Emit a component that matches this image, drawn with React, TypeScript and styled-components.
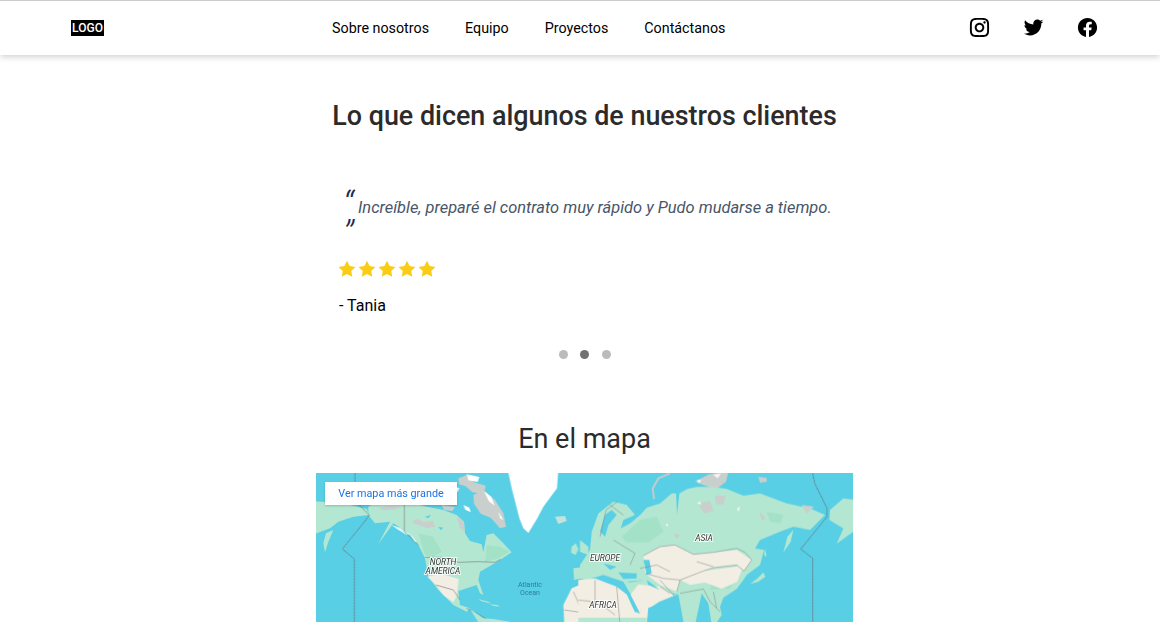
import React from "react";
import styled, { createGlobalStyle } from "styled-components";
import { RiInstagramLine, RiTwitterFill, RiFacebookCircleFill } from "react-icons/ri";

const Global = createGlobalStyle`
  html, body { margin: 0; padding: 0; background: #fff; overflow: hidden; }
  body { font-family: Roboto, "Liberation Sans", sans-serif; color: #000; }
`;
const Page = styled.div`width: 1160px; height: 622px; overflow: hidden; display: flex; flex-direction: column;`;
const Header = styled.header`
  height: 55px; flex: none; box-sizing: border-box; border-top: 1px solid #ccc; background: #fff;
  box-shadow: 0 2px 6px rgba(0,0,0,.18); display: flex; align-items: center; padding: 0 61px 0 71px;
  position: relative;
`;
const Logo = styled.div`
  width: 33px; height: 16px; background: #000; color: #fff; font-size: 12px; font-weight: 500; line-height: 16px;
  text-align: center; margin-right: 228px;
`;
const Nav = styled.nav`display: flex; gap: 36px; flex: 1;`;
const NavLink = styled.a`font-size: 14.3px; line-height: 20px; color: #000;`;
const Social = styled.div`display: flex; gap: 31px; color: #000; font-size: 23px; line-height: 0; margin-top: -1px;`;
const Main = styled.main`display: flex; flex-direction: column; align-items: center; padding-left: 9px; flex: 1;`;
const Title = styled.h2`font-size: 26.88px; line-height: 32px; font-weight: 500; color: #2b2b2b; margin: 45px 0 0;`;
const Card = styled.section`width: 493px; margin-top: 53px; box-sizing: border-box;`;
const QuoteRow = styled.div`display: flex; padding-left: 5px; height: 63px;`;
const QuoteMarks = styled.div`
  width: 15px; flex: none; font-style: italic; font-weight: 300; color: #1e2a55; font-size: 36px; line-height: 30px;
  height: 60px; margin-top: 5px;
`;
const Mark = styled.div`height: 30px;`;
const QuoteText = styled.p`font-size: 16.43px; font-style: italic; color: #475569; line-height: 24px; margin: 11px 0 0; white-space: nowrap;`;
const Stars = styled.div`display: flex; gap: 2px; margin-top: 12px; height: 18px;`;
const Author = styled.p`font-size: 16px; line-height: 24px; margin: 16px 0 0 1px;`;
const Dots = styled.div`display: flex; justify-content: center; gap: 12.5px; margin-top: 32px;`;
const Dot = styled.span<{ $active?: boolean }>`
  width: 9px; height: 9px; border-radius: 50%; background: ${p => (p.$active ? "#717171" : "#bbb")};
`;
const MapTitle = styled.h2`font-size: 27px; line-height: 32px; font-weight: 400; color: #2b2b2b; margin: 64px 0 0;`;
const MapFrame = styled.div`width: 537px; height: 149px; margin-top: 18px; position: relative; overflow: hidden; background: #58cfe5; flex: none;`;
const MapSvg = styled.svg`display: block;`;
const MapLayer = styled.g`filter: blur(.35px);`;
const MapBtn = styled.a`
  position: absolute; left: 9px; top: 9px; width: 132px; height: 23px; background: #fff; color: #1a73e8; font-size: 10.8px;
  line-height: 23px; text-align: center; box-shadow: 0 1px 2px rgba(0,0,0,.2);
`;
const MapLabel = styled.text`font-family: Roboto, sans-serif; font-size: 8.4px; font-style: italic; fill: #333; paint-order: stroke; stroke: rgba(255,255,255,.85); stroke-width: 2px;`;
const Ocean = styled.text`font-family: Roboto, sans-serif; font-size: 7px; fill: #2a7f9a;`;

const Star = () => (
  <svg width="18" height="18" viewBox="0 0 24 24" fill="#facc15">
    <path d="M12 1l3.5 7.1 7.8 1.1-5.7 5.4 1.4 7.8L12 18.7l-7 3.7 1.4-7.8L.7 9.2l7.8-1.1z" />
  </svg>
);
const land = "#b4e7d2", warm = "#f3eee3", grey = "#c9cfcc", green = "#a4e2c7", border = "#7d8486", dash = "#667680", sea = "#58cfe5";

const WorldMap = () => (
  <MapSvg width="537" height="149" viewBox="0 0 537 149">
    <MapLayer>
    <g transform="translate(-6 -8) scale(.33333)" strokeLinejoin="round">
      {/* Chukotka at the left edge, Kamchatka */}
      <path fill={land} d="M0 108L60 112L120 120L170 132L178 150L130 155L85 170L60 190L0 212z" />
      <path fill={land} d="M70 195L55 230L45 262L40 235L48 205z" />
      {/* North America */}
      <path fill={land} d="M175 125L200 112L300 112L350 125L400 135L440 150L462 170L465 205L480 228L515 238L520 262L530 210L550 205L580 235L605 262L570 285L545 300L510 320L505 345L520 390L510 385L500 360L445 378L450 420L480 430L470 440L430 420L385 375L355 335L345 280L325 240L290 200L250 175L205 237L240 170L195 175L175 150z" />
      <path fill="#fff" opacity=".75" d="M245 180l25 8 30 20-10 2-30-18zM300 205l20 25-6 2z" />
      <path fill={green} d="M325 205l45 10 25 45-25 15-25-5zM530 240l40 5 30 15-40 22-35 10z" />
      <path fill={grey} d="M305 168l20-6 15 10 30-5 5 18-25 4-20-8-15-3zM205 128l40-6 30 4-25 8-30 2zM395 120l40 6-8 12-25-4zM440 155l22 15 2 30-14-10z" />
      <path fill={sea} d="M345 155l18-5-8 10zM385 185l15 3-8 8z" />
      <path fill={land} opacity=".9" d="M285 110l30-15 15 15-10 10zM340 90l25-10 20 20-20 8z" />
      {/* Warm south west USA */}
      <path fill={warm} d="M352 335l42-8 52 15-6 52-10 18-30-22-22-30z" />
      {/* Arctic islands */}
      <path fill={grey} d="M445 40l25-10 22 22 35 10-5 25-35-5-20-18-20-6zM490 90l30-15 35 30 25 40 8 40-18 5-28-32-30-12-20-30zM395 60l30 0 5 25-25 5z" />
      <path fill="#fff" d="M470 28l38 8-5 15-28-5zM522 78l22 18 10 26-18-14zM430 62l18 8-6 12-14-8zM565 140l15 25-10-5zM460 120l18 8 4 14-16-8z" />
      {/* Greenland */}
      <path fill="#fff" d="M590 0H746L741 70L700 125L682 160L655 204L640 190L628 160L618 120L605 70z" />
      <path fill="#c4e4da" d="M735 155l30-2 5 15-25 9z" />
      {/* Borders */}
      <path fill="none" stroke={border} strokeWidth="2" d="M283 112V200L325 240M345 277H395L445 292L505 290L555 292L572 283M378 360L430 375L450 405M470 430L500 445L530 462" />
      <path fill="none" stroke={dash} strokeWidth="2.5" strokeDasharray="7 2" d="M135 25V108L178 150L165 168L97 252L133 282V480" />
      {/* Caribbean, central & south America */}
      <path fill={land} d="M505 402l30 8 8 6-30-8zM540 418l22 2 8 5-22-3z" />
      <path fill={land} d="M480 432l40 28 30 2 50 8v10H510z" />
      {/* UK, Spain */}
      <path fill={land} d="M785 245l12-10 8 18-8 17-14-7zM810 225l25 20v25l-25-10zM790 310l38-5 6 30-42 10z" />
      {/* Africa */}
      <path fill={warm} d="M845 345l-60 25-25 50 3 60h82z" />
      <path fill="none" stroke={border} strokeWidth="1.5" d="M762 435l55 8 25 22M790 380l25 55" />
    </g>
    <g transform="translate(264 -8) scale(.33333)" strokeLinejoin="round">
      <path fill={grey} d="M345 50L385 28L445 20L438 50L410 72L375 62zM535 35l25 4v11l-20 3z" />
      <path fill="#fff" opacity=".8" d="M398 28l25-3-10 15zM350 45l15 0-8 10z" />
      <path fill="none" stroke="#c4cccc" strokeWidth="6" d="M270 25L235 40L218 70L222 102" />
      {/* Eurasia */}
      <path fill={land} d="M0 300L30 255L35 200L55 145L100 110L140 120L165 150L130 165L122 190L150 175L182 148L200 128L240 115L275 85L288 85L291 150L298 85L322 72L350 66L400 66L440 72L490 92L540 85L620 115L690 130L735 150L690 195L640 185L600 200L540 225L525 250L552 255L540 300L500 330L490 345L470 372L430 398L420 425L425 450L405 480H395L385 415L365 385L345 480H312L295 388L240 380L150 385L130 350L70 330L20 345L0 340z" />
      <path fill={land} d="M610 262L622 215L640 195L632 230z" />
      <path fill={land} d="M750 135L790 100L825 105V196L770 236L790 190L748 165z" />
      <path fill={land} d="M510 357L532 340L550 322L556 335L535 350zM555 250L560 275L552 270z" />
      <path fill={green} d="M125 215L180 165L230 155L250 200L205 232L140 232zM400 330L470 320L450 370L390 375zM560 140l50 10-10 25-30-5z" />
      <path fill={grey} d="M355 115L390 108L400 138L372 145zM405 92L437 92L430 118L408 118zM665 120L702 125L680 145zM538 138L556 160L545 166zM280 205l20 5-10 12z" />
      <path fill="#fff" opacity=".7" d="M350 115l10-6 5 10zM255 180l8-5 2 10zM470 130l10-4-4 14z" />
      {/* Dry lands */}
      <path fill={warm} d="M190 272L240 245L285 240L340 268L400 262L470 255L515 285L492 318L470 300L400 308L370 318L300 345L290 380L240 360L195 325z" />
      <path fill={warm} d="M300 345L370 318L490 302L472 350L425 372L375 352L330 360z" />
      <path fill={warm} d="M150 390L175 358L240 365L280 390L292 388L238 410L215 425L170 440z" />
      <path fill={warm} d="M-5 345L45 340L110 365L140 388L165 442L205 425L200 480H-5z" />
      <path fill={land} d="M-5 458H200V480H-5z" />
      {/* Seas */}
      <path fill={sea} d="M115 322L170 325L170 340L130 342zM190 285L208 285L215 325L200 330zM150 352L195 345L140 350z" />
      <path fill={sea} d="M70 295L110 305L90 315zM143 388L150 386L180 445L170 442zM200 345L240 375L205 360z" />
      <path fill={sea} d="M60 200L75 150L95 135L110 150L85 180L75 215z" />
      <path fill="none" stroke={border} strokeWidth="1.5" d="M60 215L78 135L112 110M90 120L130 150M100 225L165 265L150 300M190 272L240 245L285 240L340 268L400 262L470 250L495 262L515 285L492 318L470 300L400 308L370 318L300 345L290 380M195 325L250 340L300 345M240 345L285 395M300 385L370 372L390 410L420 440M-5 405L55 412L105 450M45 345V425M110 365L120 480M240 365L270 385M400 380L410 430M350 290L400 305M180 310L230 300L270 320" />
      <path fill="none" stroke={dash} strokeWidth="2.5" strokeDasharray="7 2" d="M698 25L704 55L741 130V155L662 252L698 280V480" />
    </g>
    </MapLayer>
    <MapLabel x="127" y="92" textAnchor="middle">NORTH</MapLabel>
    <MapLabel x="127" y="100.5" textAnchor="middle">AMERICA</MapLabel>
    <Ocean x="214" y="114" textAnchor="middle">Atlantic</Ocean>
    <Ocean x="214" y="122" textAnchor="middle">Ocean</Ocean>
    <MapLabel x="289" y="88" textAnchor="middle">EUROPE</MapLabel>
    <MapLabel x="287" y="135" textAnchor="middle">AFRICA</MapLabel>
    <MapLabel x="388" y="68" textAnchor="middle">ASIA</MapLabel>
  </MapSvg>
);

export default function App() {
  return (
    <Page>
      <Global />
      <Header>
        <Logo>LOGO</Logo>
        <Nav>
          {["Sobre nosotros", "Equipo", "Proyectos", "Contáctanos"].map(t => <NavLink key={t}>{t}</NavLink>)}
        </Nav>
        <Social>
          <RiInstagramLine /><RiTwitterFill /><RiFacebookCircleFill />
        </Social>
      </Header>
      <Main>
        <Title>Lo que dicen algunos de nuestros clientes</Title>
        <Card>
          <QuoteRow>
            <QuoteMarks><Mark>“</Mark><Mark>”</Mark></QuoteMarks>
            <QuoteText>Increíble, preparé el contrato muy rápido y Pudo mudarse a tiempo.</QuoteText>
          </QuoteRow>
          <Stars>{[0,1,2,3,4].map(i => <Star key={i} />)}</Stars>
          <Author>- Tania</Author>
          <Dots><Dot /><Dot $active /><Dot /></Dots>
        </Card>
        <MapTitle>En el mapa</MapTitle>
        <MapFrame>
          <WorldMap />
          <MapBtn>Ver mapa más grande</MapBtn>
        </MapFrame>
      </Main>
    </Page>
  );
}
